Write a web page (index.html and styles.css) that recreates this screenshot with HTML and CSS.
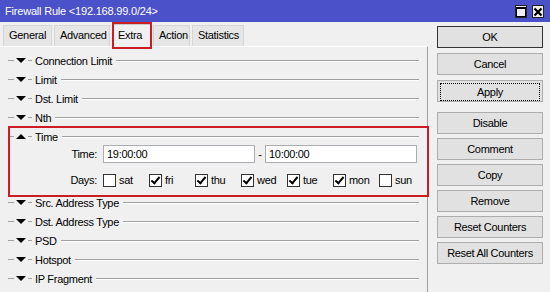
FILE: index.html
```html
<!DOCTYPE html>
<html lang="en">
  <head>
    <meta charset="UTF-8" />
    <title>Firewall Rule</title>
    <link rel="stylesheet" href="styles.css">
  </head>
  <body>
    <div class="window">
      <div class="titlebar">
        <span class="title">Firewall Rule &lt;192.168.99.0/24&gt;</span>
        <div class="winbtns">
          <span class="wbtn">
            <svg width="10" height="10" viewBox="0 0 10 10"><rect x="0.5" y="0.5" width="9" height="9" fill="none" stroke="#000"/><rect x="0" y="0" width="10" height="2" fill="#000"/></svg>
          </span>
          <span class="wbtn">
            <svg width="10" height="10" viewBox="0 0 10 10"><path d="M1.5 1.5 L8.5 8.5 M8.5 1.5 L1.5 8.5" stroke="#000" stroke-width="2.2"/></svg>
          </span>
        </div>
      </div>

      <div class="content">
        <div class="main">
          <div class="tabs">
            <div class="tab w-general">General</div>
            <div class="tab w-advanced">Advanced</div>
            <div class="tab active w-extra">Extra</div>
            <div class="tab w-action">Action</div>
            <div class="tab w-stats">Statistics</div>
          </div>

          <div class="panel">
            <div class="row"><span class="dash"></span><span class="tri down"></span><span class="dash short"></span><span class="label">Connection Limit</span><span class="rule"></span></div>
            <div class="row"><span class="dash"></span><span class="tri down"></span><span class="dash short"></span><span class="label">Limit</span><span class="rule"></span></div>
            <div class="row"><span class="dash"></span><span class="tri down"></span><span class="dash short"></span><span class="label">Dst. Limit</span><span class="rule"></span></div>
            <div class="row"><span class="dash"></span><span class="tri down"></span><span class="dash short"></span><span class="label">Nth</span><span class="rule"></span></div>

            <div class="section-open">
              <div class="row"><span class="dash"></span><span class="tri up"></span><span class="dash short"></span><span class="label">Time</span><span class="rule"></span></div>
              <div class="field-row">
                <span class="field-label">Time:</span>
                <div class="input">19:00:00</div>
                <span class="sep">-</span>
                <div class="input">10:00:00</div>
              </div>
              <div class="field-row days">
                <span class="field-label">Days:</span>
                <label class="day"><span class="box"></span>sat</label>
                <label class="day"><span class="box checked"></span>fri</label>
                <label class="day"><span class="box checked"></span>thu</label>
                <label class="day"><span class="box checked"></span>wed</label>
                <label class="day"><span class="box checked"></span>tue</label>
                <label class="day"><span class="box checked"></span>mon</label>
                <label class="day"><span class="box"></span>sun</label>
              </div>
            </div>

            <div class="row"><span class="dash"></span><span class="tri down"></span><span class="dash short"></span><span class="label">Src. Address Type</span><span class="rule"></span></div>
            <div class="row"><span class="dash"></span><span class="tri down"></span><span class="dash short"></span><span class="label">Dst. Address Type</span><span class="rule"></span></div>
            <div class="row"><span class="dash"></span><span class="tri down"></span><span class="dash short"></span><span class="label">PSD</span><span class="rule"></span></div>
            <div class="row"><span class="dash"></span><span class="tri down"></span><span class="dash short"></span><span class="label">Hotspot</span><span class="rule"></span></div>
            <div class="row"><span class="dash"></span><span class="tri down"></span><span class="dash short"></span><span class="label">IP Fragment</span><span class="rule"></span></div>
          </div>

          <!-- annotation boxes drawn over the dialog -->
          <div class="mark mark-tab"></div>
          <div class="mark mark-time"></div>
        </div>

        <div class="actions">
          <button class="btn default">OK</button>
          <button class="btn">Cancel</button>
          <button class="btn focus"><span>Apply</span></button>
          <button class="btn group">Disable</button>
          <button class="btn">Comment</button>
          <button class="btn">Copy</button>
          <button class="btn">Remove</button>
          <button class="btn">Reset Counters</button>
          <button class="btn">Reset All Counters</button>
        </div>
      </div>
    </div>
  </body>
</html>
```

FILE: styles.css
```css
body {
  margin: 0;
  width: 550px;
  height: 292px;
  overflow: hidden;
  background-color: #f0f0f0;
  font-family: "Liberation Sans", Arial, sans-serif;
  font-size: 11px;
  letter-spacing: -0.3px;
  color: #000;
}
.window {
  width: 550px;
  height: 292px;
}
.titlebar {
  height: 22px;
  background-color: #4a51c9;
  display: flex;
  align-items: center;
  justify-content: space-between;
}
.title {
  color: #fff;
  padding-left: 5px;
  letter-spacing: -0.2px;
}
.winbtns {
  display: flex;
  gap: 5px;
  padding-right: 6px;
  padding-top: 1px;
}
.wbtn {
  width: 12px;
  height: 13px;
  box-sizing: border-box;
  border: 1px solid #222;
  background-color: #efefef;
  display: flex;
  align-items: center;
  justify-content: center;
}
.content {
  display: flex;
  height: 270px;
}
.main {
  position: relative;
  width: 428px;
  display: flex;
  flex-direction: column;
}
.tabs {
  display: flex;
  align-items: flex-end;
  height: 24px;
  padding-left: 3px;
}
.tab {
  height: 21px;
  box-sizing: border-box;
  border: 1px solid #d6d6d6;
  border-bottom: none;
  background-color: #e6e6e6;
  padding-left: 5px;
  line-height: 19px;
  margin-right: 2px;
}
.tab.active {
  height: 23px;
  background-color: #f0f0f0;
  border-color: #c8c8c8;
  margin-bottom: -1px;
  position: relative;
  line-height: 20px;
}
.w-general { width: 49px; }
.w-advanced { width: 56px; }
.w-extra { width: 39px; }
.w-action { width: 37px; }
.w-stats { width: 52px; }
.panel {
  flex: 1;
  border-top: 1px solid #fff;
  border-right: 1px solid #a0a0a0;
  padding-top: 4px;
}
.row {
  display: flex;
  align-items: center;
  height: 19px;
  padding-left: 8px;
  padding-right: 8px;
}
.dash {
  width: 6px;
  height: 1px;
  background-color: #a0a0a0;
}
.dash.short {
  width: 4px;
  margin-left: 2px;
}
.tri {
  width: 0;
  height: 0;
  margin-left: 2px;
  border-left: 5px solid transparent;
  border-right: 5px solid transparent;
}
.tri.down { border-top: 5px solid #000; }
.tri.up { border-bottom: 5px solid #000; }
.label {
  margin-left: 3px;
  white-space: nowrap;
}
.rule {
  flex: 1;
  height: 1px;
  margin-left: 4px;
  background-color: #a0a0a0;
  box-shadow: 0 1px 0 #fff;
}
.field-row {
  display: flex;
  align-items: center;
  height: 18px;
  margin-top: -1px;
}
.field-label {
  width: 97px;
  text-align: right;
  margin-right: 6px;
}
.input {
  width: 152px;
  height: 18px;
  box-sizing: border-box;
  border: 1px solid #abadb3;
  background-color: #fff;
  padding-left: 3px;
  line-height: 16px;
}
.sep {
  width: 10px;
  text-align: center;
}
.days {
  height: 16px;
  margin-top: 9px;
  margin-bottom: 5px;
}
.day {
  width: 46px;
  display: flex;
  align-items: center;
}
.box {
  width: 13px;
  height: 13px;
  box-sizing: border-box;
  border: 1px solid #333;
  background-color: #fff;
  margin-right: 3px;
  position: relative;
}
.box.checked::after {
  content: "";
  position: absolute;
  left: 3px;
  top: 0px;
  width: 3px;
  height: 7px;
  border-right: 2px solid #000;
  border-bottom: 2px solid #000;
  transform: rotate(40deg);
}
.mark {
  position: absolute;
  border: 2px solid #cc1d24;
  box-sizing: border-box;
}
.mark-tab {
  left: 112px;
  top: 0px;
  width: 40px;
  height: 27px;
}
.mark-time {
  left: 8px;
  top: 104px;
  width: 421px;
  height: 71px;
}
.actions {
  margin-left: 9px;
  width: 106px;
  padding-top: 4px;
  display: flex;
  flex-direction: column;
}
.btn {
  height: 22px;
  margin-bottom: 5px;
  background-color: #e1e1e1;
  border: 1px solid #adadad;
  font-family: inherit;
  font-size: 11px;
  letter-spacing: -0.3px;
  color: #000;
  padding: 0;
}
.btn.default {
  border: 1px solid #333;
}
.btn.focus {
  padding: 2px;
}
.btn.focus span {
  display: block;
  height: 16px;
  line-height: 16px;
  border: 1px dotted #000;
}
.btn.group {
  margin-top: 5px;
}
.actions .btn:nth-child(n+4) {
  margin-bottom: 4px;
}
```
